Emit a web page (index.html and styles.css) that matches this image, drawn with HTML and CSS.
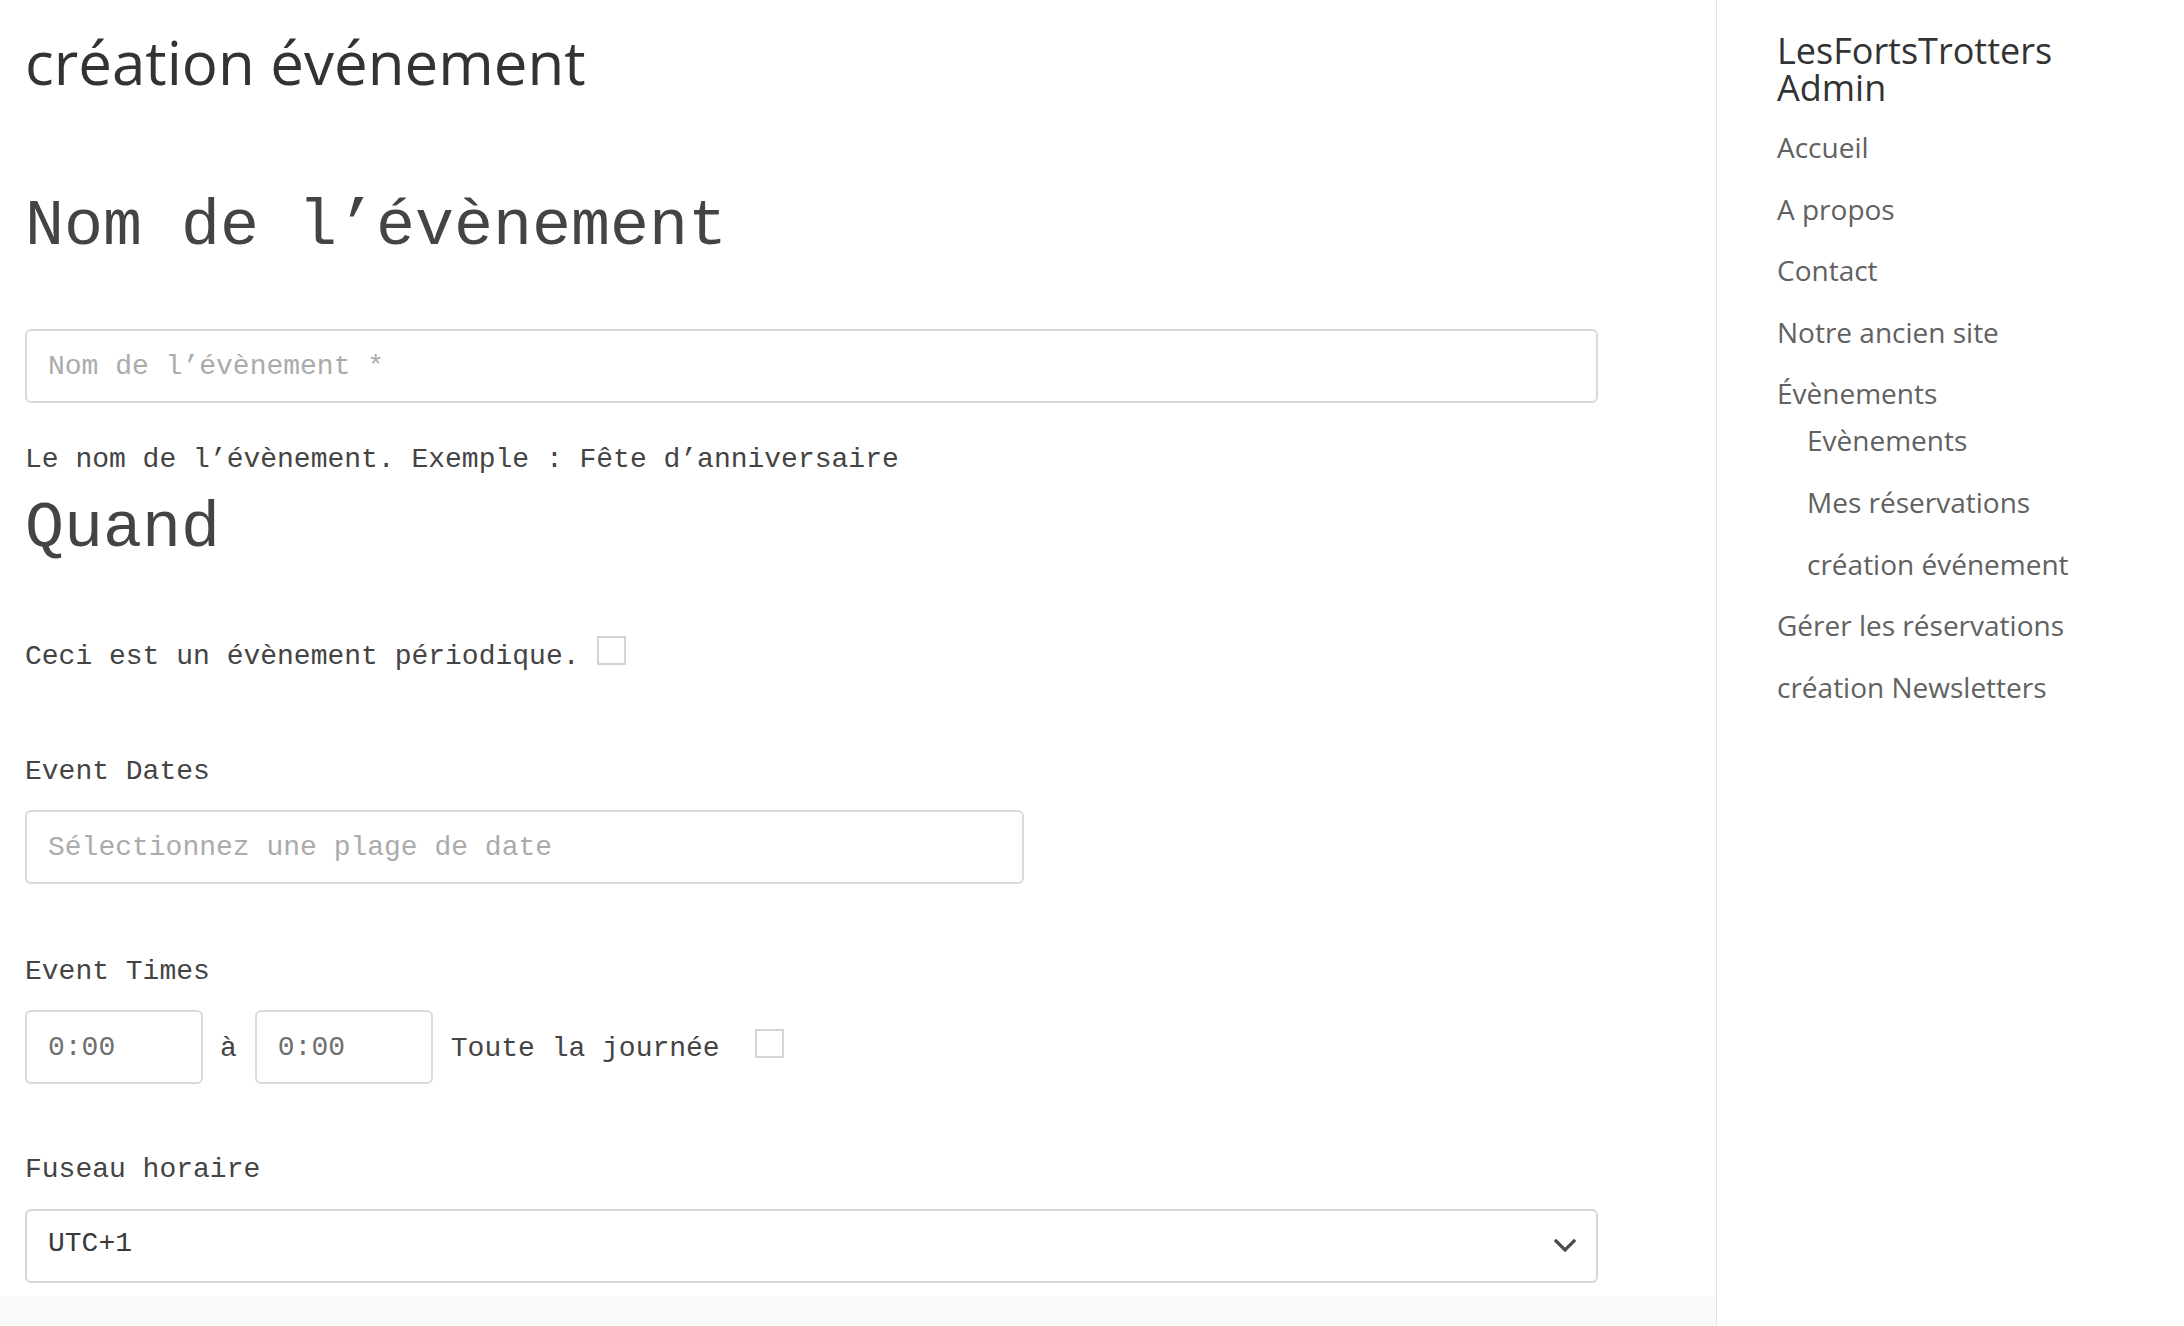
FILE: index.html
```html
<!DOCTYPE html>
<html lang="fr">
<head>
<meta charset="utf-8">
<title>création événement</title>
<link rel="stylesheet" href="styles.css">
</head>
<body>
<div class="page">
  <main class="main">
    <div class="content">
      <h1 class="page-title">création événement</h1>
      <form class="event-form">
        <h2 class="section-title section-title--name">Nom de l’évènement</h2>
        <input class="field field--full field--name" type="text" placeholder="Nom de l’évènement *">
        <p class="help">Le nom de l’évènement. Exemple : Fête d’anniversaire</p>
        <h2 class="section-title section-title--when">Quand</h2>
        <div class="check-row">
          <span class="text">Ceci est un évènement périodique.</span>
          <span class="checkbox checkbox--recurring"></span>
        </div>
        <div class="label label--dates">Event Dates</div>
        <input class="field field--dates" type="text" placeholder="Sélectionnez une plage de date">
        <div class="label label--times">Event Times</div>
        <div class="time-row">
          <input class="field field--time" type="text" value="0:00">
          <span class="text time-sep">à</span>
          <input class="field field--time" type="text" value="0:00">
          <span class="text allday">Toute la journée</span>
          <span class="checkbox checkbox--allday"></span>
        </div>
        <div class="label label--tz">Fuseau horaire</div>
        <div class="select-wrap">
          <div class="field field--full select">UTC+1</div>
          <svg class="chevron" width="22" height="13" viewBox="0 0 22 13" aria-hidden="true">
            <polyline points="2,2 11,11 20,2" fill="none" stroke="#4a4a4a" stroke-width="3.2" stroke-linecap="square"/>
          </svg>
        </div>
      </form>
    </div>
    <div class="band"></div>
  </main>
  <aside class="sidebar">
    <div class="site-title">LesFortsTrotters Admin</div>
    <ul class="nav">
      <li><a>Accueil</a></li>
      <li><a>A propos</a></li>
      <li><a>Contact</a></li>
      <li><a>Notre ancien site</a></li>
      <li><a>Évènements</a>
        <ul class="subnav">
          <li><a>Evènements</a></li>
          <li><a>Mes réservations</a></li>
          <li><a>création événement</a></li>
        </ul>
      </li>
      <li><a>Gérer les réservations</a></li>
      <li><a>création Newsletters</a></li>
    </ul>
  </aside>
</div>
</body>
</html>
```

FILE: styles.css
```css
* { box-sizing: border-box; }

html, body {
  margin: 0;
  padding: 0;
  background: #ffffff;
}

.page {
  display: grid;
  grid-template-columns: 1716px 1fr;
  height: 100vh;
  overflow: hidden;
}

.main {
  display: flex;
  flex-direction: column;
}

.content {
  padding: 29px 0 0 25px;
}

.band {
  flex: 1;
  margin-top: 13px;
  background: #fafafa;
}

.page-title {
  margin: 0;
  font-family: "Open Sans", sans-serif;
  font-weight: 400;
  font-size: 60px;
  line-height: 66px;
  color: #333333;
}

.event-form {
  display: flex;
  flex-direction: column;
  align-items: flex-start;
  width: 1573px;
  font-family: "Liberation Mono", "Courier New", monospace;
  color: #444444;
}

.section-title {
  margin: 0;
  font-family: "Liberation Mono", "Courier New", monospace;
  font-weight: 400;
  font-size: 65px;
  line-height: 78px;
  color: #444444;
}

.section-title--name { margin-top: 93px; }
.section-title--when { margin-top: 13px; }

.field {
  display: block;
  height: 74px;
  margin: 0;
  padding: 0 21px;
  border: 2px solid #dadada;
  border-radius: 6px;
  background: #ffffff;
  font-family: "Liberation Mono", "Courier New", monospace;
  font-size: 28px;
  color: #707070;
  outline: none;
}

.field::placeholder { color: #ababab; }

.field--full { width: 1573px; }
.field--name { margin-top: 63px; }
.field--dates { width: 999px; margin-top: 21px; }
.field--time { width: 178px; }

.help {
  margin: 40px 0 0;
  font-size: 28px;
  line-height: 34px;
}

.text {
  font-size: 28px;
  line-height: 34px;
  white-space: pre;
}

.check-row {
  display: flex;
  align-items: flex-start;
  margin-top: 68px;
}

.check-row .text {
  padding-top: 4px;
}

.checkbox {
  display: block;
  width: 29px;
  height: 29px;
  border: 2px solid #d4d4d4;
  background: #ffffff;
}

.checkbox--recurring { margin-left: 17px; }

.label {
  font-size: 28px;
  line-height: 34px;
}

.label--dates { margin-top: 81px; }
.label--times { margin-top: 71px; }
.label--tz { margin-top: 69px; }

.time-row {
  display: flex;
  align-items: center;
  margin-top: 21px;
  height: 74px;
}

.time-row .text { padding-top: 4px; }

.time-sep { margin: 0 18px 0 17px; }
.allday { margin-left: 18px; }
.checkbox--allday { margin: 0 0 7px 35px; }

.select-wrap {
  position: relative;
  margin-top: 22px;
}

.select {
  display: flex;
  align-items: center;
  border-color: #d3d6da;
  color: #3a3a3a;
  padding-left: 21px;
  padding-bottom: 6px;
}

.chevron {
  position: absolute;
  right: 22px;
  top: 30px;
}

.sidebar {
  border-left: 1px solid #e3e3e3;
  padding: 32px 48px 0 60px;
  font-family: "Open Sans", sans-serif;
}

.site-title {
  font-size: 36px;
  line-height: 37px;
  color: #333333;
}

.nav, .subnav {
  list-style: none;
  margin: 0;
  padding: 0;
  display: flex;
  flex-direction: column;
  gap: 19.6px;
}

.nav { margin-top: 20px; }

.subnav {
  margin-top: 5px;
  padding-left: 30px;
}

.nav a {
  display: block;
  font-size: 28px;
  line-height: 42px;
  color: #616161;
  text-decoration: none;
  white-space: nowrap;
}
```
